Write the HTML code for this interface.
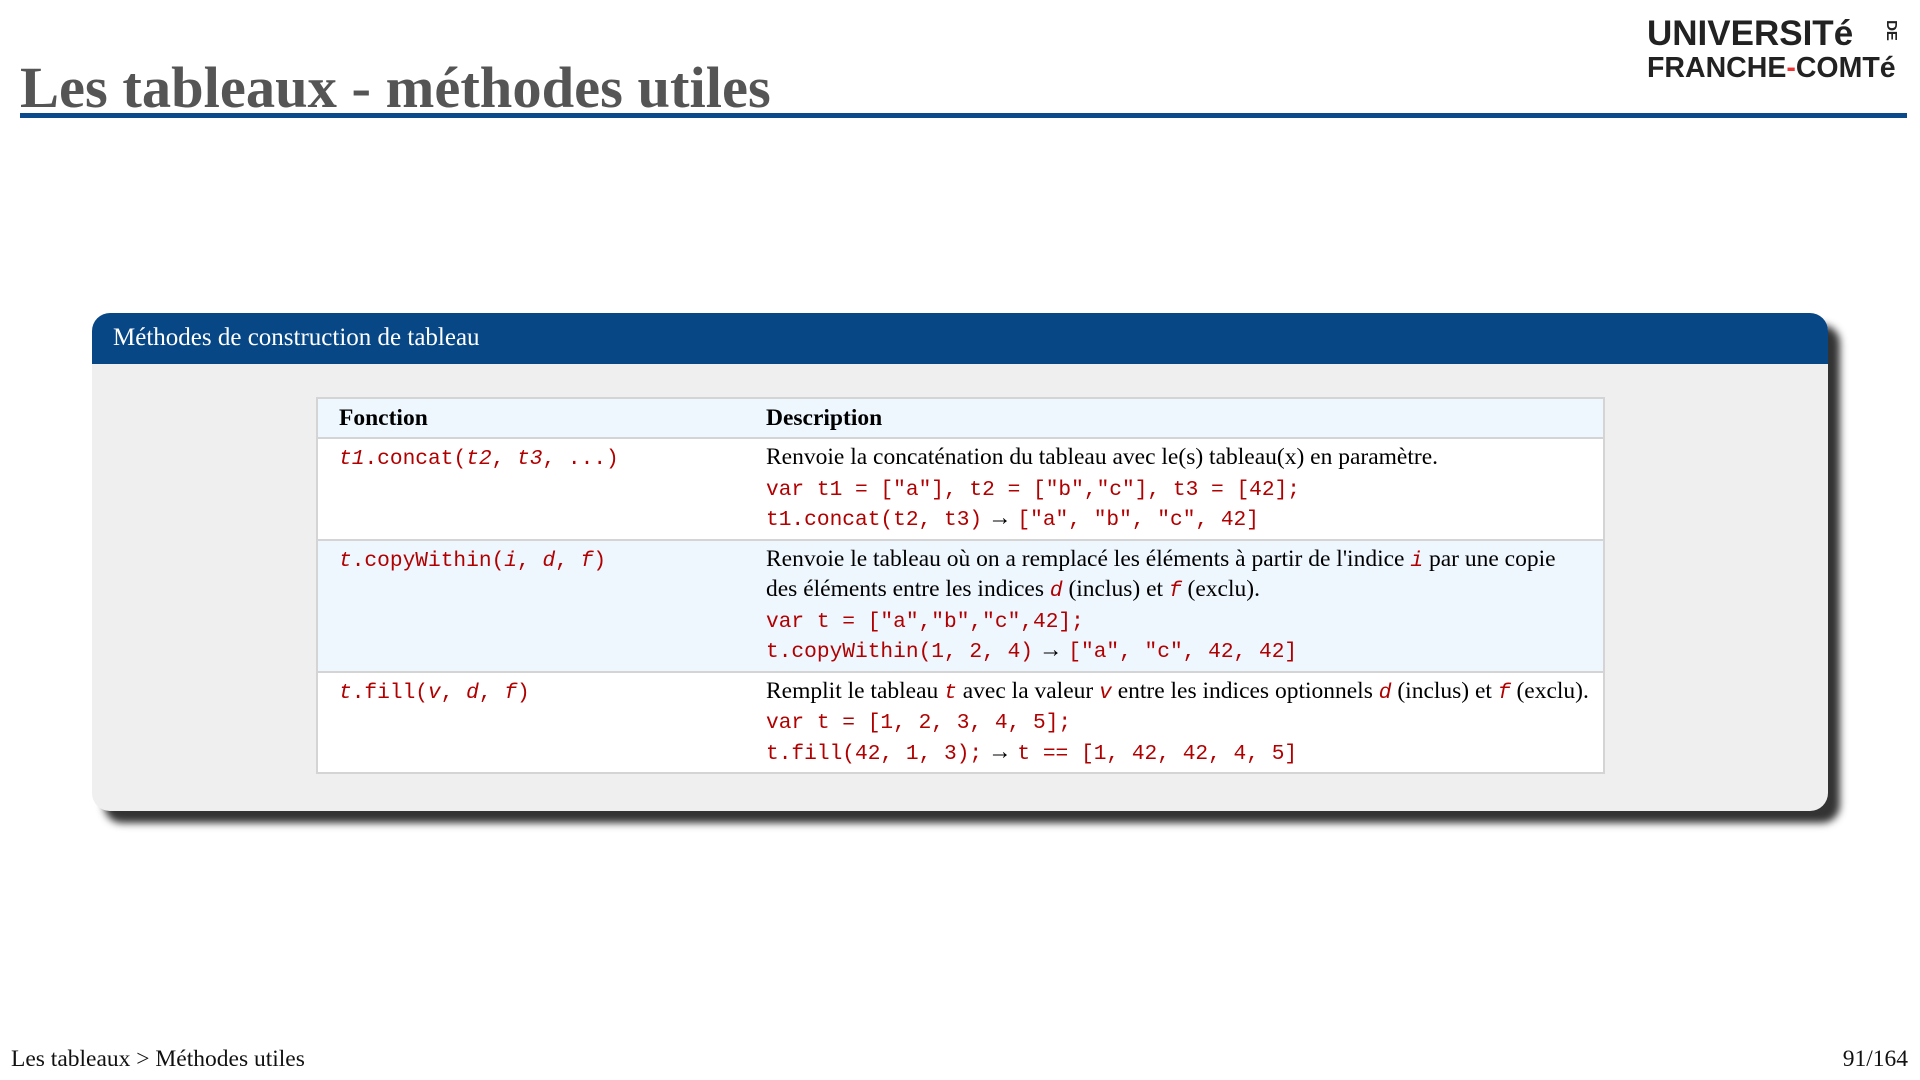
<!DOCTYPE html>
<html><head><meta charset="utf-8"><style>
body{margin:0;width:1920px;height:1080px;background:#fff;position:relative;overflow:hidden;font-family:"Liberation Serif",serif;}
.title{position:absolute;left:20px;top:58px;font-size:58.5px;font-weight:bold;color:#555;line-height:60px;white-space:nowrap;}
.rule{position:absolute;left:20px;top:113px;width:1887px;height:5px;background:#0a4a8a;}
.logo{position:absolute;left:1645px;top:12px;font-family:"Liberation Sans",sans-serif;font-weight:bold;color:#222;}
.box{position:absolute;left:92px;top:313px;width:1736px;height:498px;background:#efefef;border-radius:18px;box-shadow:12px 12px 8px #333;overflow:hidden;}
.bh{height:51px;background:#074786;color:#fff;font-size:25px;line-height:50px;padding-left:21px;}
table{position:absolute;left:224px;top:84px;width:1289px;border-collapse:collapse;font-size:23.5px;background:#fff;border-left:2px solid #d4d4d4;border-right:2px solid #d4d4d4;}
td,th{border:2px solid #d4d4d4;border-left:none;border-right:none;text-align:left;vertical-align:top;line-height:30.5px;padding:3px 0 5px 0;}
th{background:#eef6fe;padding:4px 0 3px 0;line-height:31px;}
td:first-child,th:first-child{padding-left:21px;width:406px;}
td:last-child,th:last-child{padding-left:21px;}
.alt td{background:#eef6fe;}
.m{font-family:"Liberation Mono",monospace;color:#b00000;font-size:21.2px;line-height:0;}
i.m{font-style:italic;}
.foot{position:absolute;top:1046px;font-size:23.5px;color:#111;}
</style></head><body>
<div class="title">Les tableaux - méthodes utiles</div>
<div class="rule"></div>
<div class="logo">
<div style="font-size:35px;position:absolute;left:2px;top:2px;white-space:nowrap">UNIVERSITé</div>
<div style="font-size:15px;position:absolute;left:236px;top:10px;transform:rotate(90deg)">DE</div>
<div style="font-size:28.5px;position:absolute;left:2px;top:40px;white-space:nowrap">FRANCHE<span style="color:#e33">-</span>COMTé</div>
</div>
<div class="box"><div class="bh">Méthodes de construction de tableau</div>
<table>
<tr><th>Fonction</th><th>Description</th></tr>
<tr><td><span class="m"><i>t1</i>.concat(<i>t2</i>, <i>t3</i>, ...)</span></td><td>Renvoie la concaténation du tableau avec le(s) tableau(x) en paramètre.<br><span class="m">var t1 = ["a"], t2 = ["b","c"], t3 = [42];</span><br><span class="m">t1.concat(t2, t3)</span> → <span class="m">["a", "b", "c", 42]</span></td></tr>
<tr class="alt"><td><span class="m"><i>t</i>.copyWithin(<i>i</i>, <i>d</i>, <i>f</i>)</span></td><td>Renvoie le tableau où on a remplacé les éléments à partir de l'indice <i class="m">i</i> par une copie<br>des éléments entre les indices <i class="m">d</i> (inclus) et <i class="m">f</i> (exclu).<br><span class="m">var t = ["a","b","c",42];</span><br><span class="m">t.copyWithin(1, 2, 4)</span> → <span class="m">["a", "c", 42, 42]</span></td></tr>
<tr><td><span class="m"><i>t</i>.fill(<i>v</i>, <i>d</i>, <i>f</i>)</span></td><td>Remplit le tableau <i class="m">t</i> avec la valeur <i class="m">v</i> entre les indices optionnels <i class="m">d</i> (inclus) et <i class="m">f</i> (exclu).<br><span class="m">var t = [1, 2, 3, 4, 5];</span><br><span class="m">t.fill(42, 1, 3);</span> → <span class="m">t == [1, 42, 42, 4, 5]</span></td></tr>
</table></div>
<div class="foot" style="left:11px">Les tableaux &gt; Méthodes utiles</div>
<div class="foot" style="right:12px">91/164</div>
</body></html>
